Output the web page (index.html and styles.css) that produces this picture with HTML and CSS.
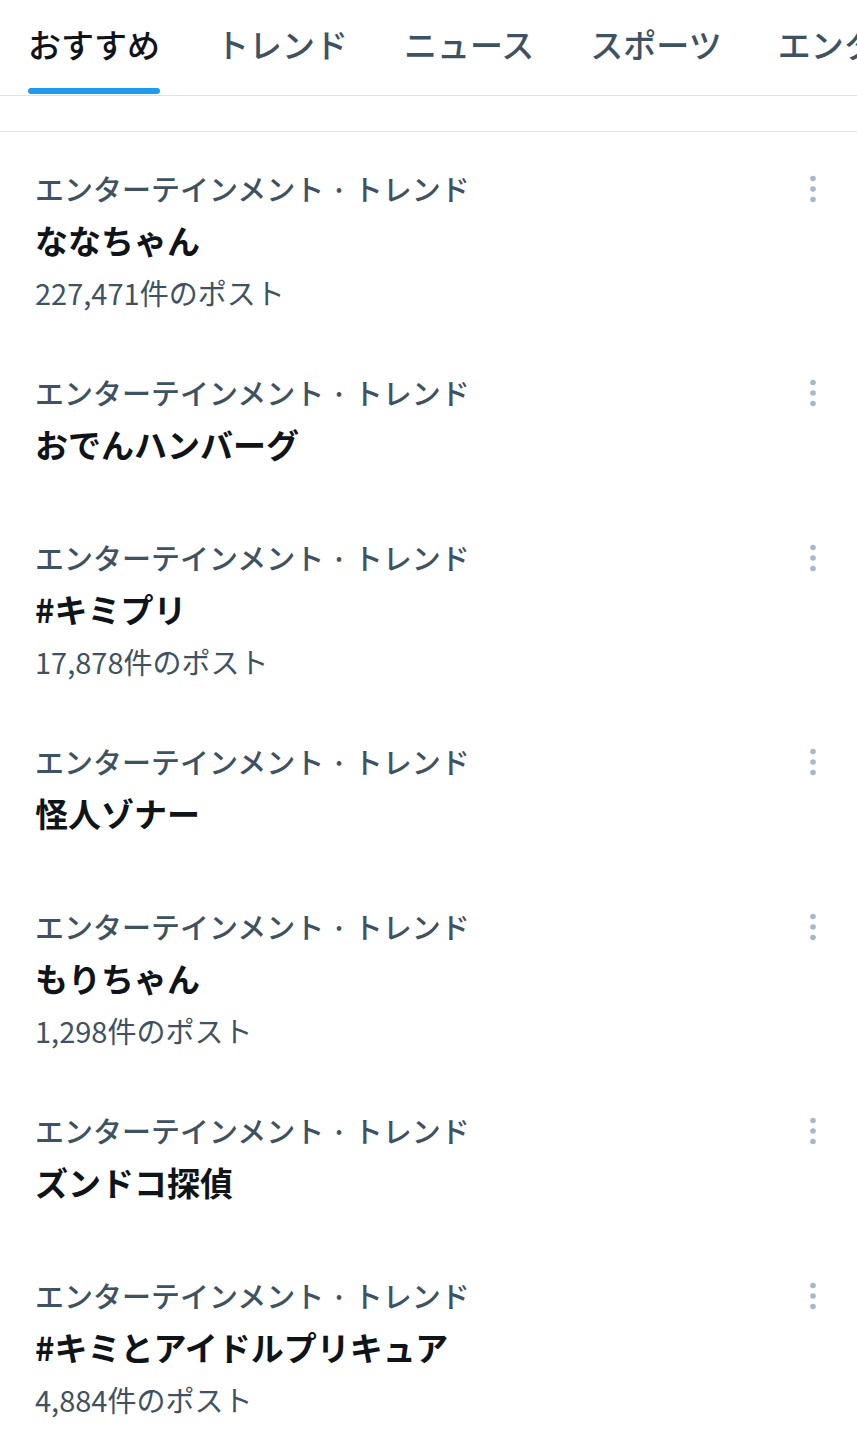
FILE: index.html
```html
<!DOCTYPE html>
<html lang="ja">
<head>
    <meta charset="utf-8" />
    <title>トレンド</title>
    <link rel="stylesheet" href="styles.css">
</head>
<body>
    <nav class="tabs">
        <a class="tab activo"><span class="tab-texto">おすすめ<i class="subrayado"></i></span></a>
        <a class="tab"><span class="tab-texto">トレンド</span></a>
        <a class="tab"><span class="tab-texto">ニュース</span></a>
        <a class="tab"><span class="tab-texto">スポーツ</span></a>
        <a class="tab"><span class="tab-texto">エンタメ</span></a>
    </nav>
    <div class="espacio"></div>

    <ul class="lista">
        <li class="tema">
            <div class="categoria">エンターテインメント · トレンド
                <svg class="mas" viewBox="0 0 12 32"><circle cx="6" cy="5.5" r="2.8"/><circle cx="6" cy="16" r="2.8"/><circle cx="6" cy="26.5" r="2.8"/></svg>
            </div>
            <div class="titulo">ななちゃん</div>
            <div class="conteo">227,471件のポスト</div>
        </li>
        <li class="tema">
            <div class="categoria">エンターテインメント · トレンド
                <svg class="mas" viewBox="0 0 12 32"><circle cx="6" cy="5.5" r="2.8"/><circle cx="6" cy="16" r="2.8"/><circle cx="6" cy="26.5" r="2.8"/></svg>
            </div>
            <div class="titulo">おでんハンバーグ</div>
        </li>
        <li class="tema">
            <div class="categoria">エンターテインメント · トレンド
                <svg class="mas" viewBox="0 0 12 32"><circle cx="6" cy="5.5" r="2.8"/><circle cx="6" cy="16" r="2.8"/><circle cx="6" cy="26.5" r="2.8"/></svg>
            </div>
            <div class="titulo">#キミプリ</div>
            <div class="conteo">17,878件のポスト</div>
        </li>
        <li class="tema">
            <div class="categoria">エンターテインメント · トレンド
                <svg class="mas" viewBox="0 0 12 32"><circle cx="6" cy="5.5" r="2.8"/><circle cx="6" cy="16" r="2.8"/><circle cx="6" cy="26.5" r="2.8"/></svg>
            </div>
            <div class="titulo">怪人ゾナー</div>
        </li>
        <li class="tema">
            <div class="categoria">エンターテインメント · トレンド
                <svg class="mas" viewBox="0 0 12 32"><circle cx="6" cy="5.5" r="2.8"/><circle cx="6" cy="16" r="2.8"/><circle cx="6" cy="26.5" r="2.8"/></svg>
            </div>
            <div class="titulo">もりちゃん</div>
            <div class="conteo">1,298件のポスト</div>
        </li>
        <li class="tema">
            <div class="categoria">エンターテインメント · トレンド
                <svg class="mas" viewBox="0 0 12 32"><circle cx="6" cy="5.5" r="2.8"/><circle cx="6" cy="16" r="2.8"/><circle cx="6" cy="26.5" r="2.8"/></svg>
            </div>
            <div class="titulo">ズンドコ探偵</div>
        </li>
        <li class="tema">
            <div class="categoria">エンターテインメント · トレンド
                <svg class="mas" viewBox="0 0 12 32"><circle cx="6" cy="5.5" r="2.8"/><circle cx="6" cy="16" r="2.8"/><circle cx="6" cy="26.5" r="2.8"/></svg>
            </div>
            <div class="titulo">#キミとアイドルプリキュア</div>
            <div class="conteo">4,884件のポスト</div>
        </li>
    </ul>
</body>
</html>
```

FILE: styles.css
```css
*
{
    margin: 0;
    padding: 0;
    box-sizing: border-box;
}

body
{
    background: #fff;
    color: #0f1419;
    font-family: "Noto Sans CJK JP", "Noto Sans", sans-serif;
    overflow: hidden;
}

.tabs
{
    display: flex;
    height: 96px;
    border-bottom: 1px solid #dde3e7;
    overflow: hidden;
    white-space: nowrap;
}

.tab
{
    flex-shrink: 0;
    padding: 0 28px;
    display: flex;
}

.tab-texto
{
    position: relative;
    display: block;
    padding-top: 24px;
    font-size: 33px;
    line-height: 40px;
    font-weight: 500;
    color: #3f5262;
}

.activo .tab-texto
{
    color: #0f1419;
}

.subrayado
{
    position: absolute;
    left: 0;
    right: 0;
    top: 88px;
    height: 6px;
    border-radius: 3px;
    background: #1d9bf0;
}

.espacio
{
    height: 36px;
    border-bottom: 1px solid #dde3e7;
}

.lista
{
    list-style: none;
}

.tema
{
    padding: 37px 0 24px 35px;
}

.categoria
{
    display: flex;
    align-items: center;
    justify-content: space-between;
    height: 39px;
    font-size: 29px;
    line-height: 39px;
    font-weight: 500;
    color: #3f5262;
}

.mas
{
    display: block;
    width: 12px;
    height: 32px;
    margin-right: 38px;
    fill: #a3bacb;
}

.titulo
{
    font-size: 33px;
    line-height: 65px;
    font-weight: 600;
}

.conteo
{
    font-size: 29px;
    line-height: 39px;
    color: #3f5262;
}
```
